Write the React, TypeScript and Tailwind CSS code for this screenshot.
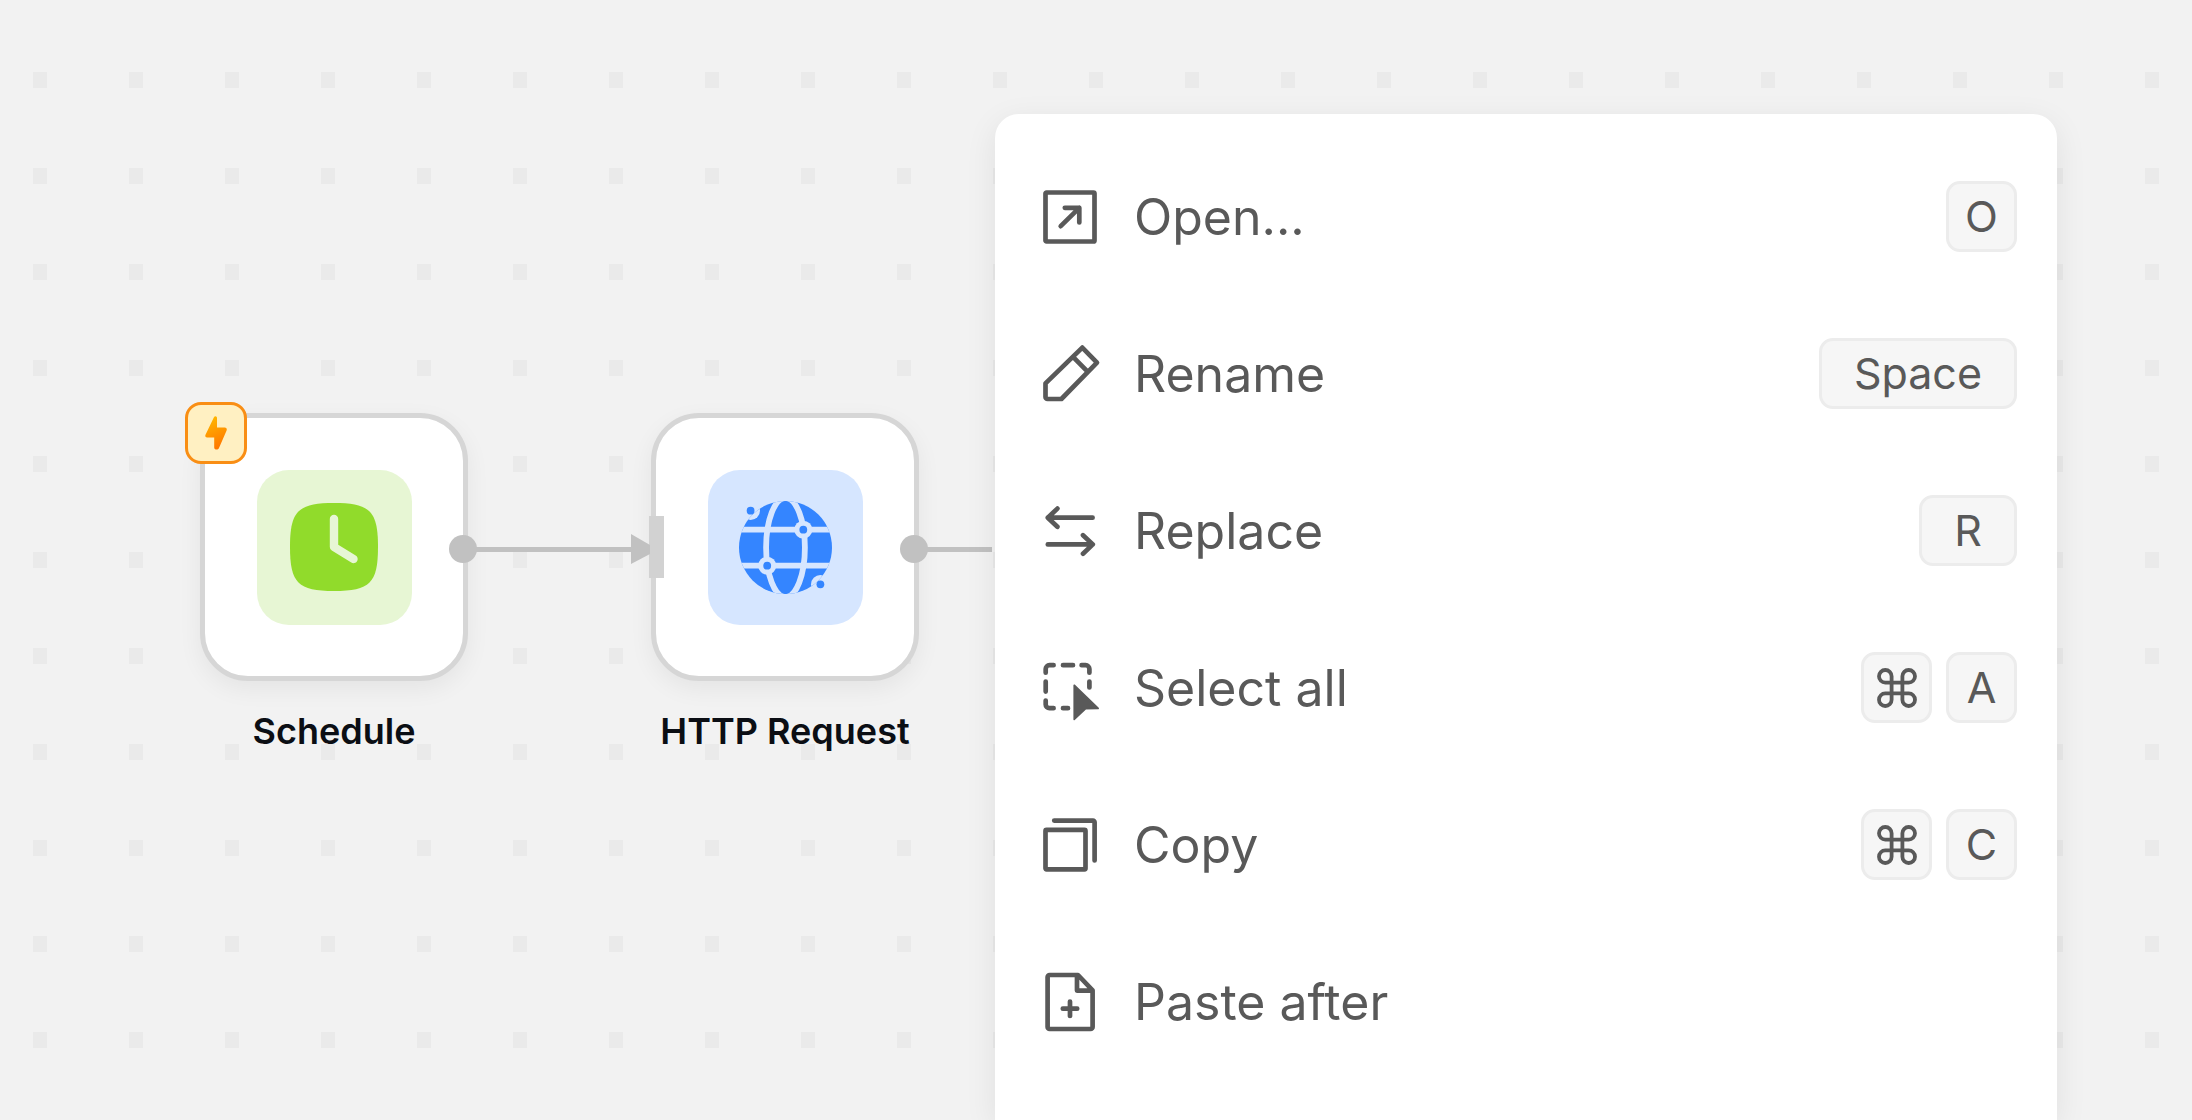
import type { ReactNode } from "react";

function Icon({ children }: { children: ReactNode }) {
  return (
    <svg
      viewBox="0 0 56 56"
      className="size-14 shrink-0 overflow-visible"
      fill="none"
      stroke="currentColor"
      strokeWidth="4.7"
      strokeLinecap="round"
      strokeLinejoin="round"
      aria-hidden="true"
    >
      {children}
    </svg>
  );
}

const OpenIcon = () => (
  <Icon>
    <rect x="3.5" y="3.5" width="49" height="49" rx="1" />
    <path d="M18.7 37.2 37.3 18.8M22.8 18.8H37.3V33.4" />
  </Icon>
);

const RenameIcon = () => (
  <Icon>
    <path d="M3.5 37.4 40.3 1.6 55 16.6 19.4 53H5.5a2 2 0 0 1-2-2ZM31 10.9 45.6 25.6" />
  </Icon>
);

const ReplaceIcon = () => (
  <Icon>
    <path d="M50.6 14.7H5.8M15.4 5.6 5.8 14.7l9.6 9.1M5.8 41.4H50.6M41 32.2l9.8 9.2-9.8 9.3" />
  </Icon>
);

const SelectIcon = () => (
  <Icon>
    <path d="M3.7 12.7V9a3.8 3.8 0 0 1 3.8-3.8H11.6M21 5.2H31M39.6 5.2H43.6A3.8 3.8 0 0 1 47.4 9V12.7M47.4 21.6V27.4M3.7 21.6V31.6M3.7 40.6V44.4A3.8 3.8 0 0 0 7.5 48.2H11.6M21 48.2H26" />
    <path
      d="M32.2 25.2 56.2 48.4 43.4 48.8 32.2 59.4Z"
      fill="currentColor"
      strokeWidth="1.6"
    />
  </Icon>
);

const CopyIcon = () => (
  <Icon>
    <rect x="3.5" y="12.9" width="40" height="39.4" rx="1" />
    <path d="M12.2 3.6H51a1.6 1.6 0 0 1 1.6 1.6V43.4" />
  </Icon>
);

const PasteIcon = () => (
  <Icon>
    <path d="M5.6 3V53a2 2 0 0 0 2 2H48.6a2 2 0 0 0 2-2V16.4L36 1H7.6a2 2 0 0 0-2 2ZM35 1.5V16.6H50.2M28 27.5V42M20.8 34.7H35.2" />
  </Icon>
);

const CommandIcon = () => (
  <svg
    viewBox="0 0 40 40"
    className="size-10"
    fill="none"
    stroke="currentColor"
    strokeWidth="3.8"
    role="img"
    aria-label="Command"
  >
    <path d="M25.4 8.3v23.4a6.3 6.3 0 1 0 6.3-6.3H8.3a6.3 6.3 0 1 0 6.3 6.3V8.3a6.3 6.3 0 1 0-6.3 6.3h23.4a6.3 6.3 0 1 0-6.3-6.3Z" />
  </svg>
);

const ClockIcon = () => (
  <svg viewBox="0 0 88 88" className="size-22" aria-hidden="true">
    <path
      d="M44 0C80 0 88 8 88 44S80 88 44 88 0 80 0 44 8 0 44 0Z"
      fill="#91db2b"
    />
    <path
      d="M44 16V44L63.5 56"
      fill="none"
      stroke="#e7f6d4"
      strokeWidth="8.4"
      strokeLinecap="round"
      strokeLinejoin="round"
    />
  </svg>
);

const GlobeIcon = () => (
  <svg viewBox="0 0 93 93" className="size-[93px]" aria-hidden="true">
    <defs>
      <clipPath id="globe-disc">
        <circle cx="46.5" cy="46.5" r="46.5" />
      </clipPath>
    </defs>
    <g clipPath="url(#globe-disc)">
      <rect width="93" height="93" fill="#3485ff" />
      <g fill="none" stroke="#d6e6ff" strokeWidth="5.8">
        <path d="M0 28.7H93M0 64.7H93" />
        <ellipse cx="46.5" cy="46.5" rx="19.4" ry="49.6" />
      </g>
      <g fill="#d6e6ff">
        <circle cx="64.3" cy="28.7" r="9" />
        <circle cx="28.2" cy="64.7" r="9" />
        <circle cx="11.6" cy="9.7" r="9.4" />
        <circle cx="81.4" cy="83.3" r="9.4" />
      </g>
    </g>
    <g fill="#3485ff">
      <circle cx="64.3" cy="28.7" r="3.9" />
      <circle cx="28.2" cy="64.7" r="3.9" />
      <circle cx="11.6" cy="9.7" r="3.9" />
      <circle cx="81.4" cy="83.3" r="3.9" />
    </g>
  </svg>
);

const BoltIcon = () => (
  <svg viewBox="0 0 22 34" className="h-[34px] w-[22px]" aria-hidden="true">
    <defs>
      <linearGradient id="bolt-fill" x1="0" y1="0" x2="0.3" y2="1">
        <stop offset="0" stopColor="#ffbe00" />
        <stop offset="1" stopColor="#ff7a00" />
      </linearGradient>
    </defs>
    <path
      d="M8.8 1.4C9.8-.6 12 0 12 2V11.6H19.8Q22.4 11.8 21.6 14.4L14 32C13 34.2 9.2 34 9.2 31.4V21.6H2Q-.4 21.4.5 18.8Z"
      fill="url(#bolt-fill)"
    />
  </svg>
);

function Node({
  label,
  className,
  tile,
  children,
  badge,
  target,
}: {
  label: string;
  className: string;
  tile: string;
  children: ReactNode;
  badge?: ReactNode;
  target?: boolean;
}) {
  return (
    <div className={"absolute flex w-[268px] flex-col items-center gap-7 " + className}>
      <div className="relative flex size-[268px] items-center justify-center rounded-[48px] border-[5px] border-[#d6d6d6] bg-white shadow-[0_8px_24px_rgba(0,0,0,0.06)]">
        <div className={"flex size-[155px] items-center justify-center rounded-[32px] " + tile}>
          {children}
        </div>
        {badge}
        {target && (
          <span className="absolute top-[98px] -left-[7px] h-[62px] w-[15px] bg-[#d2d2d2]" />
        )}
        <span className="absolute top-[117px] -right-[14px] size-7 rounded-full bg-[#c1c1c1]" />
      </div>
      <span className="text-[36px] leading-[44px] font-semibold whitespace-nowrap text-[#0b0e14]">
        {label}
      </span>
    </div>
  );
}

function Key({ children, wide }: { children: ReactNode; wide?: boolean }) {
  return (
    <kbd
      className={
        "flex h-[71px] items-center justify-center rounded-[14px] border-[3px] border-[#ececec] bg-[#f6f6f6] font-[Inter,sans-serif] text-[43px] leading-none " +
        (wide ? "px-8" : "w-[71px]")
      }
    >
      {children}
    </kbd>
  );
}

const items: { label: string; icon: ReactNode; keys: ReactNode[]; wide?: boolean }[] = [
  { label: "Open...", icon: <OpenIcon />, keys: ["O"] },
  { label: "Rename", icon: <RenameIcon />, keys: ["Space"], wide: true },
  { label: "Replace", icon: <ReplaceIcon />, keys: ["R"], wide: true },
  { label: "Select all", icon: <SelectIcon />, keys: [<CommandIcon />, "A"] },
  { label: "Copy", icon: <CopyIcon />, keys: [<CommandIcon />, "C"] },
  { label: "Paste after", icon: <PasteIcon />, keys: [] },
];

export default function App() {
  return (
    <main className="relative h-screen overflow-hidden bg-[#f2f2f2] bg-[conic-gradient(from_270deg_at_14px_16px,#eaeaea_90deg,transparent_0)] bg-[length:96px_96px] bg-[position:33px_72px] font-[Inter,sans-serif]">
      <Node
        label="Schedule"
        className="top-[413px] left-[200px]"
        tile="bg-[#e7f6d4]"
        badge={
          <span className="absolute -top-4 -left-5 flex size-[62px] items-center justify-center rounded-2xl border-[3px] border-[#f98e14] bg-[#fff0c2]">
            <BoltIcon />
          </span>
        }
      >
        <ClockIcon />
      </Node>
      <Node
        label="HTTP Request"
        className="top-[413px] left-[651px]"
        tile="bg-[#d6e6ff]"
        target
      >
        <GlobeIcon />
      </Node>

      <svg
        className="absolute top-[534px] left-[463px] h-[30px] w-[530px]"
        viewBox="0 0 530 30"
        aria-hidden="true"
      >
        <path d="M10 15.5H172M455 15.5H529" stroke="#c1c1c1" strokeWidth="5" />
        <path d="M168 0 187 11V20L168 30Z" fill="#c1c1c1" />
      </svg>

      <ul
        role="menu"
        className="absolute top-[114px] right-[135px] bottom-0 left-[995px] rounded-t-[24px] bg-white pt-6 text-[#595959] shadow-[0_8px_32px_rgba(0,0,0,0.08)]"
      >
        {items.map((item) => (
          <li key={item.label} role="none">
            <button
              type="button"
              role="menuitem"
              className="flex h-[157px] w-full items-center pr-10 pl-[47px] text-left"
            >
              {item.icon}
              <span className="ml-9 text-[50px] leading-[60px]">{item.label}</span>
              <span className="ml-auto flex gap-[14px]">
                {item.keys.map((key, i) => (
                  <Key key={i} wide={item.wide}>
                    {key}
                  </Key>
                ))}
              </span>
            </button>
          </li>
        ))}
      </ul>
    </main>
  );
}
